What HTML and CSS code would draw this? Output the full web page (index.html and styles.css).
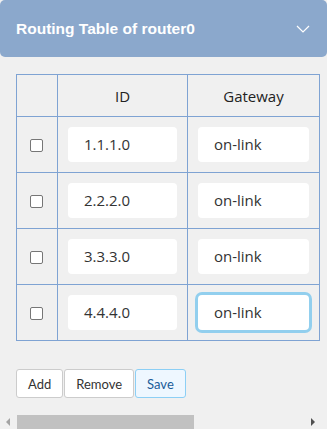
FILE: index.html
```html
<!DOCTYPE html>
<html lang="en">
<head>
  <meta charset="UTF-8">
  <meta name="viewport" content="width=device-width, initial-scale=1.0">
  <title>Routing Table</title>
  <link rel="stylesheet" href="styles.css">
</head>
<body>

  <div class="panel-header">
    <div class="panel-title">Routing Table of router0</div>
    <svg class="chevron" width="14" height="8" viewBox="0 0 14 8">
      <path d="M1 1 L7 7 L13 1" fill="none" stroke="#fff" stroke-width="1.2"/>
    </svg>
  </div>

  <div class="panel-body">
    <table class="route-table">
      <thead>
        <tr>
          <th class="col-check"></th>
          <th>ID</th>
          <th>Gateway</th>
        </tr>
      </thead>
      <tbody>
        <tr>
          <td class="col-check"><span class="checkbox"></span></td>
          <td><div class="field">1.1.1.0</div></td>
          <td><div class="field">on-link</div></td>
        </tr>
        <tr>
          <td class="col-check"><span class="checkbox"></span></td>
          <td><div class="field">2.2.2.0</div></td>
          <td><div class="field">on-link</div></td>
        </tr>
        <tr>
          <td class="col-check"><span class="checkbox"></span></td>
          <td><div class="field">3.3.3.0</div></td>
          <td><div class="field">on-link</div></td>
        </tr>
        <tr>
          <td class="col-check"><span class="checkbox"></span></td>
          <td><div class="field">4.4.4.0</div></td>
          <td><div class="field focused">on-link</div></td>
        </tr>
      </tbody>
    </table>

    <div class="actions">
      <button class="btn">Add</button>
      <button class="btn">Remove</button>
      <button class="btn btn-primary">Save</button>
    </div>
  </div>

  <!-- horizontal scrollbar of the dialog -->
  <div class="hscroll">
    <span class="arrow arrow-left"></span>
    <div class="track"><div class="thumb"></div></div>
    <span class="arrow arrow-right"></span>
  </div>

</body>
</html>
```

FILE: styles.css
```css
body {
  margin: 0;
  height: 100vh;
  background-color: #f0f0f0;
  font-family: 'Open Sans', sans-serif;
  display: flex;
  flex-direction: column;
  overflow: hidden;
}

.panel-header {
  height: 57px;
  background-color: #8ba8cc;
  border-radius: 5px;
  display: flex;
  align-items: center;
  justify-content: space-between;
  padding: 0 17px 0 16px;
  flex-shrink: 0;
}

.panel-title {
  font-family: 'Liberation Sans', Arial, sans-serif;
  font-weight: bold;
  font-size: 15.5px;
  color: #fff;
}

.chevron {
  display: block;
}

.panel-body {
  flex: 1;
  padding: 17px 7px 0 16px;
}

.route-table {
  border-collapse: collapse;
  width: 304px;
  font-size: 15px;
  color: #222;
}

.route-table th,
.route-table td {
  border: 1px solid #7fa3d3;
  padding: 0;
}

.route-table th {
  height: 41px;
  font-weight: normal;
  text-align: center;
}

.route-table td {
  height: 55px;
  padding: 0 10px;
}

.route-table .col-check {
  width: 40px;
  padding: 0;
  text-align: center;
}

.checkbox {
  display: inline-block;
  width: 11px;
  height: 11px;
  border: 1px solid #767676;
  border-radius: 2px;
  background-color: #fff;
  vertical-align: middle;
  margin: 0 2px 2px 0;
}

.field {
  height: 35px;
  line-height: 35px;
  background-color: #fff;
  border-radius: 4px;
  padding: 0 16px;
  box-sizing: border-box;
  color: #333;
}

.field.focused {
  box-shadow: 0 0 0 3px #92cfee;
}

.actions {
  display: flex;
  gap: 1px;
  margin-top: 28px;
}

.btn {
  font-family: 'Lato', sans-serif;
  font-size: 13px;
  color: #333;
  background-color: #fff;
  border: 1px solid #ccc;
  border-radius: 3px;
  height: 29px;
  padding: 0 11px;
}

.btn-primary {
  background-color: #eef7ff;
  border-color: #8ccff5;
  color: #1a5c99;
}

.hscroll {
  height: 14px;
  display: flex;
  align-items: center;
  flex-shrink: 0;
}

.arrow {
  width: 0;
  height: 0;
  border-top: 4px solid transparent;
  border-bottom: 4px solid transparent;
}

.arrow-left {
  border-right: 4px solid #a3a3a3;
  margin: 0 7px 0 6px;
}

.arrow-right {
  border-left: 4px solid #505050;
  margin: 0 12px 0 6px;
}

.track {
  flex: 1;
  height: 14px;
}

.thumb {
  width: 177px;
  height: 14px;
  background-color: #c1c1c1;
}
```
